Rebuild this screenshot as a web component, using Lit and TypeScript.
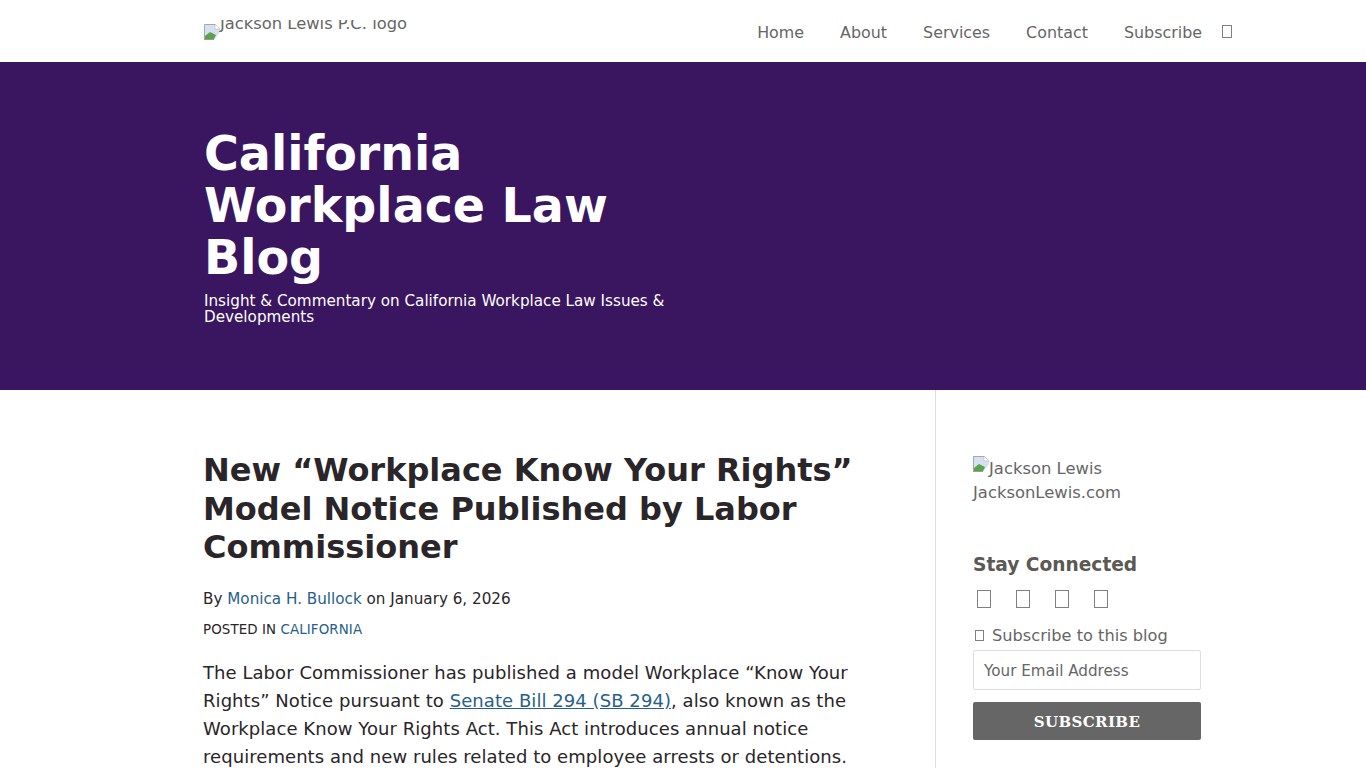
import { LitElement, html, css } from 'lit';
import { customElement } from 'lit/decorators.js';

const brokenImg = html`<svg class="broken" width="16" height="16" viewBox="0 0 16 16">
  <path d="M0 0h11l5 5v11H0z" fill="#d5e0f2"/>
  <path d="M11 0v5h5z" fill="#fff"/>
  <path d="M11 0l5 5h-5z" fill="none" stroke="#b5b5b5" stroke-width=".6"/>
  <path d="M.5 16V.5H11" stroke="#a8a8a8" fill="none"/>
  <path d="M1 15v-3l5-4 6 3-2 4z" fill="#5aa34a"/>
  <path d="M16 8l-6 8h6z" fill="#fff"/>
  <path d="M0 15.5h10" stroke="#9a9a9a"/>
</svg>`;

@customElement('app-root')
export class AppRoot extends LitElement {
  static styles = css`
    :host {
      display: block;
      height: 768px;
      overflow: hidden;
      background: #fff;
      font-family: 'DejaVu Sans', sans-serif;
      color: #2a2529;
    }
    a { color: #27608a; text-decoration: none; }
    .top {
      height: 62px;
      padding: 0 134px 0 204px;
      display: flex;
      justify-content: space-between;
      color: #666;
    }
    .logo {
      display: flex;
      font-size: 16.35px;
      line-height: 18px;
      height: 24px;
      margin-top: 20px;
      overflow: hidden;
    }
    .logo .broken { margin-top: 4px; }
    .logo span { margin-top: -5px; }
    .nav {
      display: flex;
      gap: 36px;
      align-items: center;
      font-size: 15.9px;
      height: 64px;
      color: #666;
    }
    .tofu {
      display: inline-block;
      box-sizing: border-box;
      border: 1px solid #808080;
    }
    .nav .tofu { width: 10px; height: 13px; margin-left: -16px; margin-bottom: 2px; }
    .hero {
      height: 328px;
      background: #3a1560;
      color: #fff;
      padding: 66px 0 0 204px;
      box-sizing: border-box;
    }
    .hero h1 {
      margin: 0;
      width: 470px;
      font-size: 47.5px;
      line-height: 52px;
      font-weight: 700;
    }
    .hero p {
      margin: 9px 0 0;
      width: 470px;
      font-size: 15.2px;
      line-height: 16px;
    }
    .body { display: flex; height: 378px; }
    .main { width: 935px; box-sizing: border-box; padding: 61px 72px 0 203px; }
    .main h2 {
      margin: 0 0 21px;
      font-size: 32px;
      line-height: 38.5px;
      font-weight: 700;
    }
    .by { font-size: 15.2px; line-height: 22px; margin-bottom: 9px; }
    .posted { font-size: 13.4px; line-height: 22px; margin-bottom: 18px; letter-spacing: 0.1px; }
    .copy { margin: 0; font-size: 18px; line-height: 28px; letter-spacing: 0.06px; }
    .copy a { text-decoration: underline; }
    .side {
      width: 431px;
      box-sizing: border-box;
      border-left: 1px solid #ddd;
      padding: 66px 0 0 37px;
      color: #666;
    }
    .jl { font-size: 16.4px; line-height: 24px; }
    .jl .broken { vertical-align: 2px; }
    .side h3 {
      margin: 48px 0 12px;
      font-size: 18.6px;
      line-height: 24px;
      font-weight: 700;
      color: #5c5854;
    }
    .social { display: flex; gap: 25px; padding-left: 4px; margin-bottom: 18px; margin-top: 13px; }
    .social .tofu { width: 14px; height: 18px; }
    .sub { font-size: 16.2px; line-height: 20px; margin-bottom: 4px; }
    .sub .tofu { width: 9px; height: 11px; margin-right: 8px; margin-left: 2px; }
    .email {
      box-sizing: border-box;
      width: 228px;
      height: 40px;
      border: 1px solid #ddd;
      border-radius: 2px;
      padding: 2px 10px 0;
      display: flex;
      align-items: center;
      font-size: 15.2px;
    }
    .btn {
      box-sizing: border-box;
      width: 228px;
      height: 38px;
      margin-top: 12px;
      padding-top: 2px;
      background: #666;
      color: #fff;
      border-radius: 2px;
      display: flex;
      align-items: center;
      justify-content: center;
      font-family: 'DejaVu Serif', serif;
      font-size: 15px;
      font-weight: 700;
      letter-spacing: 0.4px;
    }
  `;

  render() {
    return html`
      <header class="top">
        <div class="logo">${brokenImg}<span>Jackson Lewis P.C. logo</span></div>
        <nav class="nav">
          <span>Home</span><span>About</span><span>Services</span><span>Contact</span><span>Subscribe</span>
          <span class="tofu"></span>
        </nav>
      </header>
      <section class="hero">
        <h1>California Workplace Law Blog</h1>
        <p>Insight &amp; Commentary on California Workplace Law Issues &amp; Developments</p>
      </section>
      <div class="body">
        <main class="main">
          <h2>New “Workplace Know Your Rights” Model Notice Published by Labor Commissioner</h2>
          <div class="by">By <a href="#">Monica H. Bullock</a> on January 6, 2026</div>
          <div class="posted">POSTED IN <a href="#">CALIFORNIA</a></div>
          <p class="copy">The Labor Commissioner has published a model Workplace “Know Your Rights” Notice pursuant to <a href="#">Senate Bill 294 (SB 294)</a>, also known as the Workplace Know Your Rights Act. This Act introduces annual notice requirements and new rules related to employee arrests or detentions.</p>
        </main>
        <aside class="side">
          <div class="jl">${brokenImg}Jackson Lewis<br />JacksonLewis.com</div>
          <h3>Stay Connected</h3>
          <div class="social">
            <span class="tofu"></span><span class="tofu"></span><span class="tofu"></span><span class="tofu"></span>
          </div>
          <div class="sub"><span class="tofu"></span>Subscribe to this blog</div>
          <div class="email">Your Email Address</div>
          <div class="btn">SUBSCRIBE</div>
        </aside>
      </div>
    `;
  }
}
